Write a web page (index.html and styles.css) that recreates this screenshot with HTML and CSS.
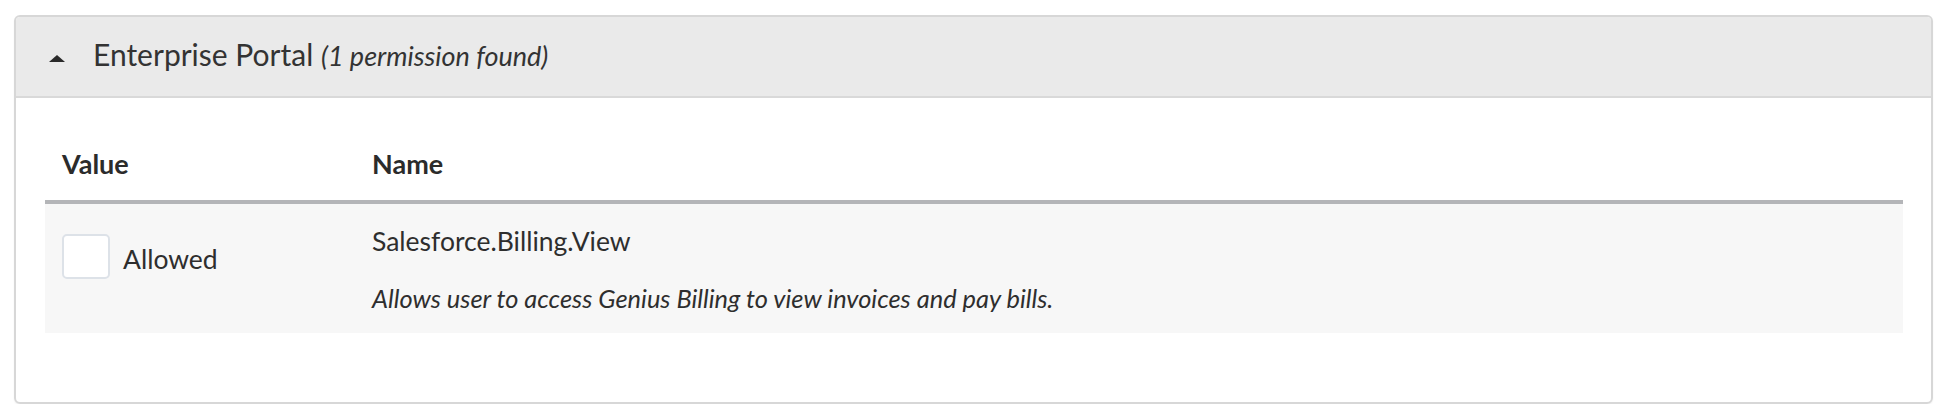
FILE: index.html
```html
<!DOCTYPE html>
<html lang="en">
<head>
    <meta charset="UTF-8">
    <meta name="viewport" content="width=device-width, initial-scale=1.0">
    <title>Permissions</title>
    <link rel="stylesheet" href="styles.css">
</head>
<body>
    <div class="panel">
        <div class="panel-heading">
            <span class="caret"></span>
            <span class="panel-title">Enterprise Portal <em class="panel-count">(1 permission found)</em></span>
        </div>

        <div class="panel-body">
            <table class="perm-table">
                <thead>
                    <tr>
                        <th class="col-value">Value</th>
                        <th>Name</th>
                    </tr>
                </thead>
                <tbody>
                    <tr>
                        <td class="col-value">
                            <label class="perm-value">
                                <span class="checkbox"></span>
                                <span class="perm-label">Allowed</span>
                            </label>
                        </td>
                        <td>
                            <div class="perm-name">Salesforce.Billing.View</div>
                            <div class="perm-desc">Allows user to access Genius Billing to view invoices and pay bills.</div>
                        </td>
                    </tr>
                </tbody>
            </table>
        </div>
    </div>
</body>
</html>
```

FILE: styles.css
```css
* {
    margin: 0;
    padding: 0;
    box-sizing: border-box;
}

body {
    font-family: 'Lato', 'Open Sans', sans-serif;
    color: #2e2e2e;
    background: white;
    padding-top: 15px;
}

.panel {
    margin: 0 14px;
    border: 2px solid #d7d7d7;
    border-radius: 6px;
    box-shadow: 0 1px 2px rgba(0,0,0,0.06);
    overflow: hidden;
}

.panel-heading {
    display: flex;
    align-items: center;
    height: 81px;
    padding: 0 0 4px 33px;
    background: #eaeaea;
    border-bottom: 2px solid #d9d9d9;
}

.caret {
    width: 0;
    height: 0;
    margin-top: 8px;
    margin-right: 28px;
    border-left: 8px solid transparent;
    border-right: 8px solid transparent;
    border-bottom: 7px solid #2a2a2a;
}

.panel-title {
    font-size: 30px;
    line-height: 36px;
    color: #333;
}

.panel-count {
    font-size: 27px;
    font-style: italic;
}

.panel-body {
    padding: 30px 28px 69px 29px;
}

.perm-table {
    width: 100%;
    border-collapse: collapse;
    text-align: left;
}

.perm-table th {
    padding: 20px 17px;
    font-size: 27px;
    line-height: 32px;
    font-weight: 700;
    color: #2b2b2b;
    border-bottom: 4px solid #b4b5b8;
}

.perm-table th.col-value,
.perm-table td.col-value {
    width: 310px;
}

.perm-table td {
    vertical-align: top;
    padding: 21px 17px 20px;
    background: #f7f7f7;
    font-size: 26.5px;
    line-height: 32px;
}

.perm-table td.col-value {
    padding-top: 30px;
}

.perm-value {
    display: flex;
    align-items: flex-start;
    gap: 13px;
}

.checkbox {
    width: 48px;
    height: 45px;
    flex-shrink: 0;
    background: white;
    border: 2px solid #dde2e8;
    border-radius: 5px;
}

.perm-label {
    padding-top: 9px;
}

.perm-desc {
    margin-top: 26px;
    font-size: 25.4px;
    line-height: 30px;
    font-style: italic;
}
```
